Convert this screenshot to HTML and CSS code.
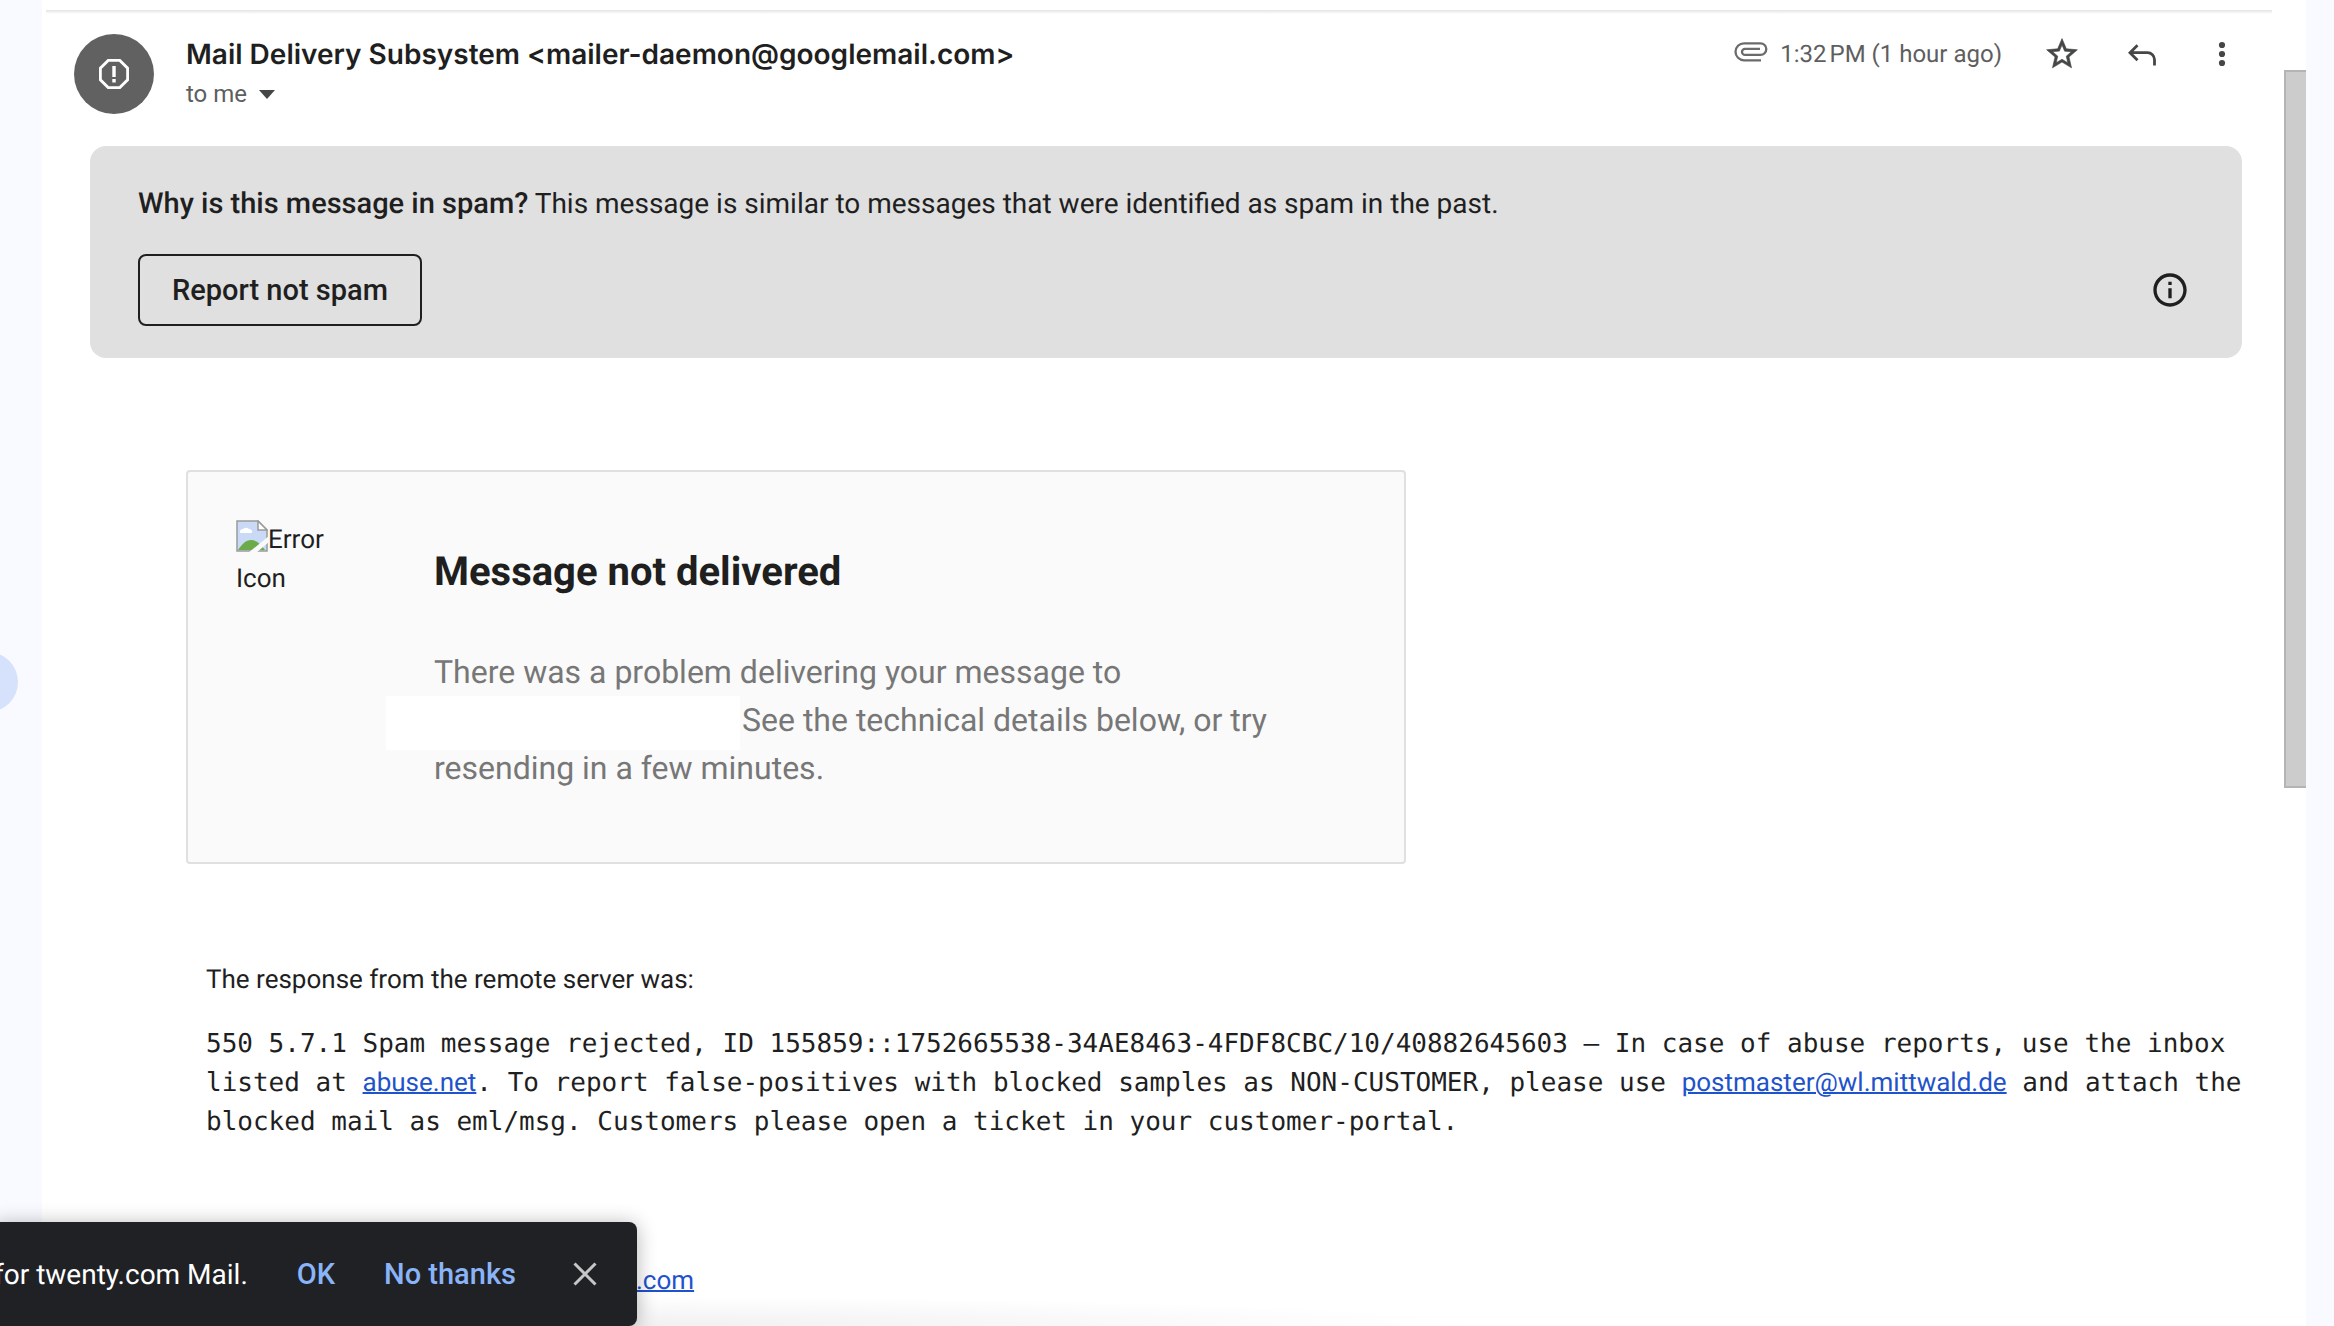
FILE: index.html
```html
<!DOCTYPE html>
<html lang="en">
<head>
    <meta charset="UTF-8">
    <meta name="viewport" content="width=device-width, initial-scale=1.0">
    <title>Delivery Status Notification</title>
    <link rel="stylesheet" href="styles.css">
</head>
<body>
    <div class="side-handle"></div>

    <div class="pane">
        <main class="thread">
            <div class="divider"></div>

            <header class="message-header">
                <div class="avatar">
                    <svg width="34" height="34" viewBox="0 0 34 34" fill="none" stroke="#fff" stroke-width="2.8">
                        <path d="M11.2 3.4h11.600l7.800 7.800v11.600l-7.800 7.800h-11.600l-7.800-7.800v-11.600z"/>
                        <path d="M17 9v11M17 22v3.500" stroke-width="3.400"/>
                    </svg>
                </div>
                <div class="sender">
                    <h2 class="sender-name">Mail Delivery Subsystem &lt;mailer-daemon@googlemail.com&gt;</h2>
                    <button class="recipient">to me
                        <svg width="16" height="9" viewBox="0 0 16 9"><path d="M0 0h16L8 9z" fill="#444746"/></svg>
                    </button>
                </div>
                <div class="actions">
                    <svg class="clip" width="34" height="20" viewBox="0 0 34 20" fill="none" stroke="#6b6b6b" stroke-width="2.3">
                        <path d="M27 18.300H10a8.500 8.500 0 0 1 0-17H26.500a5.800 5.800 0 0 1 0 11.600H11a3 3 0 0 1 0-6h15"/>
                    </svg>
                    <time class="date">1:32&#8239;PM (1 hour ago)</time>
                    <button class="icon-btn" aria-label="Star">
                        <svg width="40" height="40" viewBox="-1 -1 26 26" fill="#444746" stroke="#444746" stroke-width="0.4"><path d="M22 9.240l-7.190-.62L12 2 9.190 8.630 2 9.240l5.460 4.730L5.820 21 12 17.270 18.180 21l-1.630-7.030L22 9.240zM12 15.400l-3.760 2.270 1-4.280-3.320-2.880 4.380-.38L12 6.100l1.710 4.040 4.380.38-3.320 2.880 1 4.280L12 15.400z"/></svg>
                    </button>
                    <button class="icon-btn" aria-label="Reply">
                        <svg width="40" height="40" viewBox="0 0 40 40" fill="none" stroke="#444746" stroke-width="2.8"><path d="M15.500 11.200L8 18.700l7.500 7.500M8 18.700h17.500a7 7 0 0 1 7 7v5.800"/></svg>
                    </button>
                    <button class="icon-btn" aria-label="More">
                        <svg width="40" height="40" viewBox="0 0 40 40" fill="#444746"><circle cx="20" cy="11" r="3.100"/><circle cx="20" cy="20" r="3.100"/><circle cx="20" cy="29" r="3.100"/></svg>
                    </button>
                </div>
            </header>

            <section class="spam-banner">
                <p class="spam-text"><strong>Why is this message in spam?</strong> This message is similar to messages that were identified as spam in the past.</p>
                <div class="spam-row">
                    <button class="report-btn">Report not spam</button>
                    <button class="info-btn" aria-label="Learn more">
                        <svg width="40" height="40" viewBox="0 0 24 24" fill="#1f1f1f"><path d="M11 7h2v2h-2zm0 4h2v6h-2zm1-9C6.480 2 2 6.480 2 12s4.480 10 10 10 10-4.480 10-10S17.520 2 12 2zm0 18c-4.410 0-8-3.590-8-8s3.590-8 8-8 8 3.590 8 8-3.590 8-8 8z"/></svg>
                    </button>
                </div>
            </section>

            <section class="mail-body">
                <div class="notice">
                    <div class="notice-icon">
                        <svg width="32" height="32" viewBox="0 0 32 32">
                            <path d="M1 1h21l9 9v21H1z" fill="#c9d9f6" stroke="#9a9a9a" stroke-width="1.500"/>
                            <path d="M22 1v9h9z" fill="#fff" stroke="#9a9a9a" stroke-width="1.500"/>
                            <path d="M4 13a3 3 0 0 1 3-4 4 4 0 0 1 6 0 3 3 0 0 1 3 4z" fill="#fff"/>
                            <path d="M2 30c4-6 8-10 13-10s10 4 14 10z" fill="#6cab4a"/>
                            <path d="M12 33L33 16v6L20 33z" fill="#fafafa"/>
                        </svg>Error Icon
                    </div>
                    <div class="notice-content">
                        <h1 class="notice-title">Message not delivered</h1>
                        <p class="notice-text">There was a problem delivering your message to <span class="redacted"></span>See the technical details below, or try resending in a few minutes.</p>
                    </div>
                </div>

                <div class="response">
                    <p>The response from the remote server was:</p>
                    <p class="server-output">550 5.7.1 Spam message rejected, ID 155859::1752665538-34AE8463-4FDF8CBC/10/40882645603 – In case of abuse reports, use the inbox listed at <a href="#">abuse.net</a>. To report false-positives with blocked samples as NON-CUSTOMER, please use <a href="#">postmaster@wl.mittwald.de</a> and attach the blocked mail as eml/msg. Customers please open a ticket in your customer-portal.</p>
                </div>

                <p class="footer-link"><a href="#">.com</a></p>
            </section>
        </main>
        <div class="scrollbar"><div class="thumb"></div></div>
    </div>

    <div class="bottom-shade"></div>

    <div class="toast" role="status">
        <span class="toast-text">for twenty.com Mail.</span>
        <button class="toast-btn">OK</button>
        <button class="toast-btn">No thanks</button>
        <button class="toast-close" aria-label="Close">
            <svg width="24" height="24" viewBox="0 0 24 24" stroke="#c4c7c5" stroke-width="3"><path d="M1.500 1.500l21 21M22.500 1.500l-21 21"/></svg>
        </button>
    </div>
</body>
</html>
```

FILE: styles.css
```css
* {
    margin: 0;
    padding: 0;
    box-sizing: border-box;
}

body {
    font-family: Roboto, Arial, sans-serif;
    font-size: 26px;
    line-height: 39px;
    text-rendering: geometricPrecision;
    color: #1f1f1f;
    background: #f8faff;
    height: 100vh;
    overflow: hidden;
    padding: 0 28px 0 42px;
}

button {
    font: inherit;
    color: inherit;
    background: none;
    border: none;
    cursor: pointer;
}

svg {
    display: block;
    flex: none;
}

a {
    color: #1f53cc;
    font-family: Roboto, Arial, sans-serif;
    text-decoration: underline;
    text-decoration-thickness: 2px;
}

.side-handle {
    position: absolute;
    left: -42px;
    top: 652px;
    width: 60px;
    height: 60px;
    border-radius: 50%;
    background: #d6e2fb;
}

.pane {
    display: flex;
    height: 100%;
    background: #fff;
}

.thread {
    flex: 1;
    min-width: 0;
    padding-top: 10px;
}

.divider {
    height: 4px;
    margin: 0 12px 0 4px;
    background: linear-gradient(#e4e4e4, #fff);
}

/* Message header */
.message-header {
    display: flex;
    align-items: flex-start;
    gap: 32px;
    padding: 20px 42px 0 32px;
}

.avatar {
    display: flex;
    align-items: center;
    justify-content: center;
    width: 80px;
    height: 80px;
    border-radius: 50%;
    background: #616161;
}

.sender {
    flex: 1;
}

.sender-name {
    font-family: Inter, Roboto, sans-serif;
    font-size: 28px;
    font-weight: 600;
    line-height: 40px;
}

.recipient {
    display: flex;
    align-items: center;
    gap: 12px;
    font-size: 24px;
    line-height: 40px;
    color: #5e5e5e;
}

.actions {
    display: flex;
    align-items: center;
    height: 40px;
}

.clip {
    margin-bottom: 4px;
}

.date {
    margin: 0 40px 0 12px;
    font-size: 24px;
    color: #5e5e5e;
}

.icon-btn {
    margin-left: 40px;
}

.date + .icon-btn {
    margin-left: 0;
}

/* Spam banner */
.spam-banner {
    margin: 32px 42px 0 48px;
    padding: 36px 52px 32px 48px;
    border-radius: 16px;
    background: #e0e0e0;
}

.spam-text {
    font-size: 28px;
    line-height: 43px;
}

.spam-text strong {
    font-size: 29px;
    font-weight: 500;
}

.spam-row {
    display: flex;
    align-items: center;
    justify-content: space-between;
    margin-top: 28px;
}

.report-btn {
    height: 72px;
    padding: 0 32px;
    border: 2px solid #1f1f1f;
    border-radius: 8px;
    font-size: 29px;
    font-weight: 500;
}

/* Mail content */
.mail-body {
    padding: 112px 36px 0 144px;
}

.notice {
    display: flex;
    gap: 100px;
    max-width: 1220px;
    padding: 48px;
    border: 2px solid #e0e0e0;
    border-radius: 4px;
    background: #fafafa;
}

.notice-icon {
    flex: none;
    width: 98px;
}

.notice-icon svg {
    display: inline-block;
    vertical-align: -4px;
}

.notice-content {
    flex: 1;
    min-width: 0;
}

.notice-title {
    font-size: 40px;
    line-height: 48px;
    padding-top: 28px;
}

.notice-text {
    margin-top: 52px;
    padding-bottom: 22px;
    font-size: 32px;
    line-height: 48px;
    color: #777;
}

.redacted {
    display: inline-block;
    width: 354px;
    height: 54px;
    margin: -8px 2px -8px -48px;
    background: #fff;
    vertical-align: middle;
}

.response {
    padding: 97px 0 0 20px;
}

.server-output {
    margin-top: 25px;
    font-family: "DejaVu Sans Mono", monospace;
}

.footer-link {
    padding: 120px 0 0 450px;
}

/* Scrollbar */
.scrollbar {
    width: 22px;
    padding-top: 70px;
}

.thumb {
    height: 718px;
    border: 2px solid #b4b4b4;
    border-right: none;
    background: #ccc;
}

/* Toast */
.bottom-shade {
    position: absolute;
    left: 0;
    bottom: 0;
    width: 1500px;
    height: 30px;
    background: radial-gradient(ellipse at 40% 100%, rgba(0, 0, 0, 0.06), transparent 70%);
}

.toast {
    position: absolute;
    left: -6px;
    bottom: 0;
    display: flex;
    align-items: center;
    height: 104px;
    padding-right: 40px;
    border-radius: 0 8px 8px 0;
    background: #202124;
    box-shadow: 0 2px 20px rgba(0, 0, 0, 0.3);
    color: #fff;
    font-size: 28px;
}

.toast-btn {
    margin-left: 49px;
    color: #8ab4f8;
    font-size: 29px;
    font-weight: 500;
}

.toast-close {
    margin-left: 57px;
}
```
